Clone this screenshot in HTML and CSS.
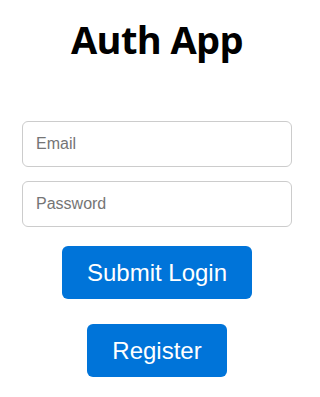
FILE: index.html
```html
<!DOCTYPE html>
<html lang="en">
<head>
<meta charset="utf-8">
<title>Auth App</title>
<link rel="stylesheet" href="styles.css">
</head>
<body>
<main class="app">
  <h1 class="title">Auth App</h1>
  <form class="form">
    <input class="field" type="email" placeholder="Email">
    <input class="field field-password" type="password" placeholder="Password">
    <button class="btn btn-submit" type="button">Submit Login</button>
  </form>
  <button class="btn btn-register" type="button">Register</button>
</main>
</body>
</html>
```
FILE: styles.css
```css
html, body {
  margin: 0;
  padding: 0;
  background: #ffffff;
}
body {
  font-family: "Liberation Sans", Arial, sans-serif;
}
.app {
  display: flex;
  flex-direction: column;
  align-items: center;
  padding: 14px 6px 0 0;
}
.title {
  margin: 0;
  font-family: "Open Sans", "Noto Sans", sans-serif;
  font-weight: 700;
  font-size: 38px;
  letter-spacing: -0.6px;
  line-height: 50px;
  color: #000;
}
.form {
  margin-top: 57px;
  width: 270px;
  display: flex;
  flex-direction: column;
  align-items: center;
}
.field {
  box-sizing: border-box;
  width: 270px;
  height: 46px;
  padding: 0 13px;
  border: 1px solid #cccccc;
  border-radius: 6px;
  font-family: "Liberation Sans", Arial, sans-serif;
  font-size: 16px;
  color: #222;
  background: #fff;
  outline: none;
}
.field::placeholder {
  color: #757575;
}
.field-password {
  margin-top: 14px;
}
.btn {
  box-sizing: border-box;
  height: 53px;
  padding: 0 25px;
  border: none;
  border-radius: 6px;
  background: #0074d9;
  color: #ffffff;
  font-family: "Liberation Sans", Arial, sans-serif;
  font-size: 24px;
  line-height: 53px;
  cursor: pointer;
}
.btn-submit {
  margin-top: 19px;
}
.btn-register {
  margin-top: 25px;
}
```
